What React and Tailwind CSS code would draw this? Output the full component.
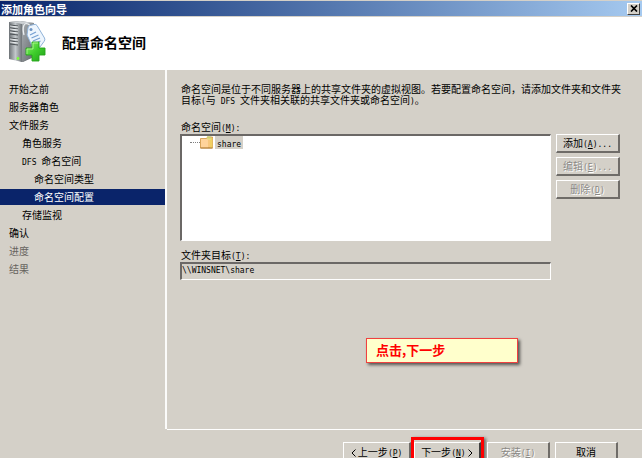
import React from "react";
import clsx from "clsx";

const steps = [
  { label: "开始之前", level: 0 },
  { label: "服务器角色", level: 0 },
  { label: "文件服务", level: 0 },
  { label: "角色服务", level: 1 },
  { label: "命名空间", prefix: "DFS ", level: 1 },
  { label: "命名空间类型", level: 2 },
  { label: "命名空间配置", level: 2, current: true },
  { label: "存储监视", level: 1 },
  { label: "确认", level: 0 },
  { label: "进度", level: 0, pending: true },
  { label: "结果", level: 0, pending: true },
];

const indents = ["pl-[9px]", "pl-[22px]", "pl-[34px]"];

// Half-width characters: half as wide as a Chinese character.
function Latin({ children }) {
  return (
    <span className="whitespace-pre font-['DejaVu_Sans_Mono',monospace] text-[8px] leading-[0]">
      {children}
    </span>
  );
}

function Key({ letter, after = "" }) {
  return (
    <Latin>
      (<u>{letter}</u>){after}
    </Latin>
  );
}

function Button({ children, className, disabled }) {
  return (
    <button
      type="button"
      disabled={disabled}
      className={clsx(
        "flex shrink-0 items-center justify-center whitespace-nowrap border-t border-l border-r-2 border-b-2 border-t-white border-l-white border-r-[#6f6c68] border-b-[#6f6c68] bg-[#d4d0c8] leading-3",
        disabled ? "text-[#8b8985] [text-shadow:1px_1px_0_#ffffff]" : "text-black",
        className,
      )}
    >
      <span>{children}</span>
    </button>
  );
}

function ServerIcon() {
  return (
    <svg className="h-[42px] w-[38px] shrink-0" viewBox="0 0 38 42" aria-hidden="true">
      <defs>
        <linearGradient id="front" x1="0" x2="1">
          <stop offset="0" stopColor="#6d7276" />
          <stop offset="0.5" stopColor="#c3c8cb" />
          <stop offset="1" stopColor="#6f7478" />
        </linearGradient>
        <linearGradient id="side" x1="0" y1="0" x2="1" y2="1">
          <stop offset="0" stopColor="#a7acb0" />
          <stop offset="1" stopColor="#62676b" />
        </linearGradient>
        <linearGradient id="plus" x1="0" y1="0" x2="1" y2="1">
          <stop offset="0" stopColor="#8cf06a" />
          <stop offset="0.5" stopColor="#3fcd2c" />
          <stop offset="1" stopColor="#1f9e18" />
        </linearGradient>
      </defs>
      <path d="M1 1 L12 0 L26 2 L26 36 L15 41 L1 37Z" fill="#6f7478" />
      <path d="M1 1 L14 3 V41 L1 38Z" fill="url(#front)" />
      <path d="M14 3 L26 2 V35 L14 41Z" fill="url(#side)" />
      <path d="M1 1 L12 0 L26 2 L14 3Z" fill="#cdd1d4" />
      <path d="M2 4l8 1M2 7l8 1M2 10l8 1M2 13l8 1M2 17l8 1M2 20l8 1M2 23l8 1" stroke="#4b5054" strokeWidth="1" />
      <path d="M2 5l8 1M2 8l8 1M2 11l8 1M2 18l8 1M2 21l8 1" stroke="#f4f6f7" strokeWidth="0.8" />
      <circle cx="10" cy="37.500" r="1.400" fill="#7dff3c" />
      <path d="M16 14C14 6 16 1 20 3S22 8 22 9" fill="none" stroke="#eceff1" strokeWidth="1.300" />
      <path d="M20 7Q20 5 22 4.500L26 3.500Q28 3 29 4.500L36.500 17Q37.500 19 36 20.500L32 26L25 27L19 14Z" fill="#edf5fd" stroke="#8fb2d8" strokeWidth="1" />
      <circle cx="23" cy="8.500" r="1.500" fill="#6e94c3" />
      <path d="M22 14l6-3M23.500 17l7-3M25 20l7-3M26.500 23l6-3" stroke="#76a0d2" strokeWidth="1.200" />
      <path d="M24 21h7v6h6v7h-6v6h-7v-6h-6v-7h6z" fill="url(#plus)" stroke="#27a51c" strokeWidth="0.900" />
      <path d="M25 28v-6h5M19 33v-5h6" fill="none" stroke="#b6f99a" strokeWidth="0.800" />
    </svg>
  );
}

function FolderIcon() {
  return (
    <svg className="h-[13px] w-[13px] shrink-0" viewBox="0 0 13 13" aria-hidden="true">
      <path d="M0.500 2.500h6l1-1.500h5v11h-12z" fill="#f7c77d" stroke="#cf9440" strokeWidth="0.800" />
      <path d="M1 3h6l1 1v7.500h-7z" fill="#ffd39b" />
      <path d="M10 2h2.500v10h-2.500z" fill="#f0cf62" />
      <path d="M7 0.500h4v3h-4z" fill="#e9e38a" />
      <path d="M8 0.500v2M10 0.500v2" stroke="#9aa23c" strokeWidth="0.700" />
      <path d="M0.500 12h12" stroke="#ad7935" strokeWidth="1" />
    </svg>
  );
}

function Chevron({ d }) {
  return (
    <svg className="inline-block h-2 w-[5px]" viewBox="0 0 5 8" aria-hidden="true">
      <path d={d} fill="none" stroke="currentColor" />
    </svg>
  );
}

export default function App() {
  return (
    <div className="flex h-screen flex-col overflow-hidden bg-[#d4d0c8] font-['Noto_Sans_CJK_SC',sans-serif] text-[10px] leading-[11px] text-black">
      <div className="flex h-4 shrink-0 items-center justify-between border-t border-[#d4d0c8] bg-linear-to-r from-[#0a246a] to-[#a6caf0] pr-0.5 pl-px">
        <h1 className="text-[11px] leading-[14px] font-bold text-white">添加角色向导</h1>
        <button
          type="button"
          aria-label="关闭"
          className="flex h-3 w-[13px] items-center justify-center border border-t-white border-l-white border-r-[#404040] border-b-[#404040] bg-[#d4d0c8]"
        >
          <svg className="h-[7px] w-2" viewBox="0 0 8 7" aria-hidden="true">
            <path d="M1 0.500l6 6M7 0.500l-6 6" stroke="black" strokeWidth="1.700" />
          </svg>
        </button>
      </div>

      <header className="flex h-[54px] shrink-0 items-center gap-4 border-t border-[#d4d0c8] bg-white pb-[3px] pl-2">
        <ServerIcon />
        <h2 className="text-[14px] leading-5 font-bold">配置命名空间</h2>
      </header>

      <div className="flex min-h-0 flex-1">
        <nav className="w-[167px] shrink-0 border-r-2 border-[#fbfbfa] pt-[11px]">
          <ol className="flex flex-col gap-0.5">
            {steps.map((step) => (
              <li key={step.label}>
                <a
                  href="#"
                  aria-current={step.current ? "step" : undefined}
                  className={clsx(
                    "block h-4 leading-4 whitespace-nowrap",
                    indents[step.level],
                    step.current && "bg-[#0a246a] text-white",
                    step.pending && "text-[#66635e]",
                  )}
                >
                  {step.prefix && <Latin>{step.prefix}</Latin>}
                  {step.label}
                </a>
              </li>
            ))}
          </ol>
        </nav>

        <div className="relative flex min-w-0 flex-1 flex-col">
          <main className="min-h-0 flex-1 pt-[13px] pr-[22px] pl-[13px]">
            <p className="-mr-0.5 pl-px">
              命名空间是位于不同服务器上的共享文件夹的虚拟视图。若要配置命名空间，请添加文件夹和文件夹目标
              <Latin>(</Latin>与<Latin> DFS </Latin>文件夹相关联的共享文件夹或命名空间<Latin>)</Latin>。
            </p>

            <h3 id="namespaces" className="mt-4 pb-0.5 pl-px">
              命名空间
              <Key letter="M" after=":" />
            </h3>
            <div className="flex gap-[5px]">
              <ul
                role="tree"
                aria-labelledby="namespaces"
                className="h-[107px] min-w-0 flex-1 border-t-2 border-l-2 border-r border-b border-t-[#6b6866] border-l-[#6b6866] border-r-white border-b-white bg-white pl-2"
              >
                <li role="treeitem" aria-selected="true" className="flex items-center">
                  <span className="w-[10px] border-t border-dotted border-[#808080]" />
                  <FolderIcon />
                  <span className="ml-0.5 bg-[#d4d0c8] px-0.5 leading-[13px]">
                    <Latin>share</Latin>
                  </span>
                </li>
              </ul>
              <div className="flex w-16 flex-col gap-1">
                <Button className="h-[19px]">
                  添加
                  <Key letter="A" after="..." />
                </Button>
                <Button className="h-[19px]" disabled>
                  编辑
                  <Key letter="E" after="..." />
                </Button>
                <Button className="h-[19px]" disabled>
                  删除
                  <Key letter="D" />
                </Button>
              </div>
            </div>

            <div className="mt-2 mr-[69px] flex flex-col">
              <label htmlFor="target" className="pb-0.5 pl-px">
                文件夹目标
                <Key letter="T" after=":" />
              </label>
              <input
                id="target"
                readOnly
                defaultValue="\\WINSNET\share"
                className="h-[18px] w-full border-t-2 border-l-2 border-r border-b border-t-[#6b6866] border-l-[#6b6866] border-r-white border-b-white bg-[#d4d0c8] pb-0.5 font-['DejaVu_Sans_Mono',monospace] text-[8px] leading-3"
              />
            </div>
          </main>

          <div className="absolute bottom-[66px] left-[199px] h-[25px] w-[152px] border border-[#f04040] bg-[#ffffcc] pl-[9px] text-[13px] leading-[22px] font-bold text-[#ff0000] shadow-[2px_2px_3px_#00000099]">
            点击,下一步
          </div>
        </div>
      </div>

      <footer className="ml-[167px] flex h-[29px] shrink-0 justify-end border-t border-white pt-3 pr-6">
        <Button className="h-5 w-[68px]">
          <Chevron d="M4.500 0.500L1 4L4.500 7.500" /> 上一步
          <Key letter="P" />
        </Button>
        <div className="-mt-[5px] h-[30px] w-[73px] shrink-0 border-[3px] border-b-0 border-[#f00] pt-0.5 shadow-[2px_1px_3px_#00000080]">
          <Button className="h-5 w-full border-t-[#404040] border-l-[#404040] border-r-[#404040]">
            下一步
            <Key letter="N" /> <Chevron d="M0.500 0.500L4 4L0.500 7.500" />
          </Button>
        </div>
        <Button className="ml-[3px] h-5 w-[63px]" disabled>
          安装
          <Key letter="I" />
        </Button>
        <Button className="ml-[5px] h-5 w-[63px]">取消</Button>
      </footer>
    </div>
  );
}
